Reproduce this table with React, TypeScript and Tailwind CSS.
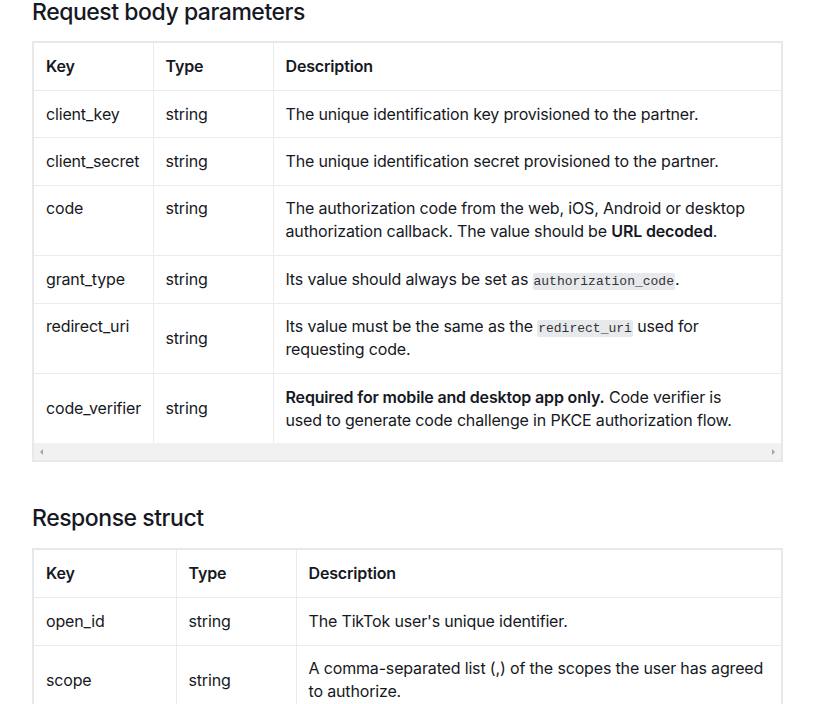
import React from 'react';

type Row = {
  key: string;
  keyAlign?: 'top' | 'middle';
  typeAlign?: 'top' | 'middle';
  desc: React.ReactNode;
};

const Code = ({ children }: { children: React.ReactNode }) => (
  <code className="rounded-[2px] bg-[#e8e9ed] px-[1px] py-[1px] font-['Liberation_Mono',monospace] text-[13px] leading-none tracking-normal text-[#333]">
    {children}
  </code>
);

const requestRows: Row[] = [
  { key: 'client_key', desc: 'The unique identification key provisioned to the partner.' },
  { key: 'client_secret', desc: 'The unique identification secret provisioned to the partner.' },
  {
    key: 'code',
    keyAlign: 'top',
    typeAlign: 'top',
    desc: (
      <>
        The authorization code from the web, iOS, Android or desktop
        <br />
        authorization callback. The value should be <b className="font-semibold">URL decoded</b>.
      </>
    ),
  },
  {
    key: 'grant_type',
    desc: (
      <>
        Its value should always be set as <Code>authorization_code</Code>.
      </>
    ),
  },
  {
    key: 'redirect_uri',
    keyAlign: 'top',
    desc: (
      <>
        Its value must be the same as the <Code>redirect_uri</Code> used for
        <br />
        requesting code.
      </>
    ),
  },
  {
    key: 'code_verifier',
    desc: (
      <>
        <b className="font-semibold">Required for mobile and desktop app only.</b> Code verifier is
        <br />
        used to generate code challenge in PKCE authorization flow.
      </>
    ),
  },
];

const responseRows: Row[] = [
  { key: 'open_id', desc: "The TikTok user's unique identifier." },
  {
    key: 'scope',
    desc: (
      <>
        A comma-separated list (,) of the scopes the user has agreed
        <br />
        to authorize.
      </>
    ),
  },
];

function ParamTable({ rows, cols, scrollbar }: { rows: Row[]; cols: [number, number]; scrollbar?: boolean }) {
  return (
    <div className="border-2 border-[#e8e8e8]">
      <table className="w-full table-fixed border-collapse text-left">
        <colgroup>
          <col style={{ width: cols[0] }} />
          <col style={{ width: cols[1] }} />
          <col />
        </colgroup>
        <thead>
          <tr className="border-b border-[#ebebeb]">
            <th className="px-[12px] py-[12px] font-semibold">Key</th>
            <th className="border-l border-[#ebebeb] px-[12px] py-[12px] font-semibold">Type</th>
            <th className="border-l border-[#ebebeb] px-[12px] py-[12px] font-semibold">Description</th>
          </tr>
        </thead>
        <tbody>
          {rows.map((r, i) => (
            <tr key={r.key} className={`${i < rows.length - 1 ? 'border-b' : ''} border-[#ebebeb]`}>
              <td className={`px-[12px] py-[11.7px] ${r.keyAlign === 'top' ? 'align-top' : 'align-middle'}`}>{r.key}</td>
              <td className={`border-l border-[#ebebeb] px-[12px] py-[11.7px] ${r.typeAlign === 'top' ? 'align-top' : 'align-middle'}`}>
                string
              </td>
              <td className="whitespace-nowrap border-l border-[#ebebeb] px-[12px] py-[11.7px] align-middle">{r.desc}</td>
            </tr>
          ))}
        </tbody>
      </table>
      {scrollbar && (
        <div className="flex h-[17px] items-center justify-between bg-[#f1f1f1] px-[5px]">
          <svg width="6" height="8" viewBox="0 0 6 8">
            <path d="M4 1 L1 4 L4 7 Z" fill="#a3a3a3" />
          </svg>
          <svg width="6" height="8" viewBox="0 0 6 8">
            <path d="M2 1 L5 4 L2 7 Z" fill="#a3a3a3" />
          </svg>
        </div>
      )}
    </div>
  );
}

export default function App() {
  return (
    <div className="min-h-[704px] bg-white px-[32px] font-['Inter',sans-serif] text-[16px] leading-[23px] tracking-[-0.01em] text-[#161823]">
      <h2 className="text-[23px] leading-[24px] font-medium tracking-[-0.02em]">Request body parameters</h2>
      <div className="mt-[17px]">
        <ParamTable rows={requestRows} cols={[119, 120]} scrollbar />
      </div>
      <h2 className="mt-[44px] text-[23px] leading-[24px] font-medium tracking-[-0.02em]">Response struct</h2>
      <div className="mt-[18px]">
        <ParamTable rows={responseRows} cols={[142, 120]} />
      </div>
    </div>
  );
}
